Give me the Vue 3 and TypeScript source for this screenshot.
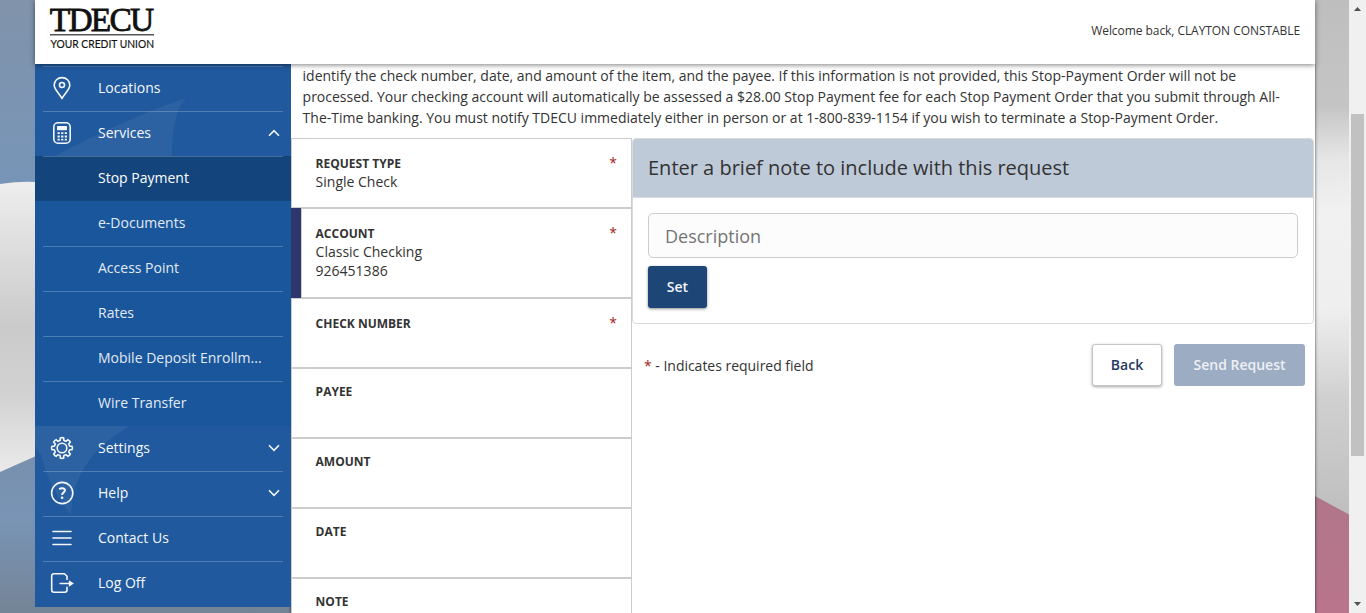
<script setup lang="ts">
interface NavItem {
  label: string
  icon?: string
  sub?: boolean
  active?: boolean
  chevron?: 'up' | 'down'
  plain?: boolean
}

interface Field {
  label: string
  values: string[]
  required?: boolean
  selected?: boolean
}

const navItems: NavItem[] = [
  { label: 'Locations', icon: 'pin' },
  { label: 'Services', icon: 'calculator', chevron: 'up' },
  { label: 'Stop Payment', sub: true, active: true },
  { label: 'e-Documents', sub: true, plain: true },
  { label: 'Access Point', sub: true },
  { label: 'Rates', sub: true },
  { label: 'Mobile Deposit Enrollm...', sub: true },
  { label: 'Wire Transfer', sub: true },
  { label: 'Settings', icon: 'gear', chevron: 'down', plain: true },
  { label: 'Help', icon: 'help', chevron: 'down' },
  { label: 'Contact Us', icon: 'menu' },
  { label: 'Log Off', icon: 'logout' },
]

const fields: Field[] = [
  { label: 'Request Type', values: ['Single Check'], required: true },
  { label: 'Account', values: ['Classic Checking', '926451386'], required: true, selected: true },
  { label: 'Check Number', values: [], required: true },
  { label: 'Payee', values: [] },
  { label: 'Amount', values: [] },
  { label: 'Date', values: [] },
  { label: 'Note', values: [] },
]

// Outline of the settings gear: eight rounded teeth around the centre.
const gearPath = (() => {
  const pts: string[] = []
  for (let i = 0; i < 8; i++) {
    const a = (i * Math.PI) / 4 - Math.PI / 2
    const at = (r: number, d: number) =>
      `${(12 + r * Math.cos(a + d)).toFixed(2)} ${(12 + r * Math.sin(a + d)).toFixed(2)}`
    pts.push(`${i ? 'L' : 'M'}${at(8, -0.22)}L${at(10.2, -0.17)}Q${at(10.8, 0)} ${at(10.2, 0.17)}L${at(8, 0.22)}Q${at(7.4, 0.39)} ${at(8, 0.565)}`)
  }
  return pts.join('') + 'Z'
})()
</script>

<template>
  <div class="page">
    <svg class="backdrop" viewBox="0 0 1349 613" preserveAspectRatio="none" aria-hidden="true">
      <defs>
        <linearGradient id="skyTop" x1="0" y1="0" x2="0" y2="1">
          <stop offset="0" stop-color="#8093aa" /><stop offset="1" stop-color="#7795b8" />
        </linearGradient>
        <linearGradient id="cloth" x1="0" y1="0" x2="0" y2="1">
          <stop offset="0" stop-color="#eeeeee" /><stop offset=".12" stop-color="#e4e4e4" />
          <stop offset=".45" stop-color="#cbcbcb" /><stop offset=".66" stop-color="#d1d1d1" />
          <stop offset=".9" stop-color="#e9e9e9" /><stop offset="1" stop-color="#e2e2e2" />
        </linearGradient>
        <linearGradient id="skyLow" x1="0" y1="0" x2="0" y2="1">
          <stop offset="0" stop-color="#7890ad" /><stop offset=".4" stop-color="#7994b5" />
          <stop offset="1" stop-color="#748496" />
        </linearGradient>
        <linearGradient id="steel" gradientUnits="userSpaceOnUse" x1="1330" y1="0" x2="1350" y2="530">
          <stop offset="0" stop-color="#bebebe" /><stop offset=".2" stop-color="#c5c5c5" />
          <stop offset=".3" stop-color="#e6e6e6" /><stop offset=".4" stop-color="#f1f1f1" />
          <stop offset=".58" stop-color="#efefef" /><stop offset=".75" stop-color="#d0d0d0" />
          <stop offset="1" stop-color="#bcbcbc" />
        </linearGradient>
        <linearGradient id="rose" x1="0" y1="0" x2="0" y2="1">
          <stop offset="0" stop-color="#b0768a" /><stop offset="1" stop-color="#b9758c" />
        </linearGradient>
      </defs>
      <rect width="36" height="190" fill="url(#skyTop)" />
      <path d="M0 184Q20 181 36 182V500H0Z" fill="url(#cloth)" />
      <path d="M0 472L36 456V606H292V613H0Z" fill="url(#skyLow)" />
      <rect x="1314" width="35" height="530" fill="url(#steel)" />
      <path d="M1314 495.500L1349 514.500V613H1314Z" fill="url(#rose)" />
    </svg>

    <div class="shell">
      <header class="top">
        <svg class="logo" width="106" height="44" viewBox="0 0 106 44" role="img" aria-label="TDECU Your Credit Union">
          <text class="brand" x="-0.200" y="24" textLength="104.500" lengthAdjust="spacing">TDECU</text>
          <rect x="0" y="27" width="104" height="1.500" fill="#555" />
          <text class="tag" x="0.500" y="40.500" textLength="103.500" lengthAdjust="spacingAndGlyphs">YOUR CREDIT UNION</text>
        </svg>
        <span class="welcome">Welcome back, CLAYTON CONSTABLE</span>
      </header>

      <div class="body">
        <nav class="nav">
          <svg class="sheen" width="256" height="543" viewBox="0 0 256 543" aria-hidden="true">
            <path d="M20 92Q90 55 151 34Q137 48 137 92Z" fill="#fff" opacity=".06" />
            <path d="M0 362H95Q60 382 47 408Q37 424 36 451Q12 420 6 390Q0 385 0 380Z" fill="#fff" opacity=".06" />
          </svg>
          <ul class="nav-list">
            <li
              v-for="item in navItems"
              :key="item.label"
              :class="['nav-item', { sub: item.sub, active: item.active, plain: item.plain }]"
            >
              <span class="nav-icon">
                <svg v-if="item.icon" width="24" height="24" viewBox="0 0 24 24">
                  <g v-if="item.icon === 'pin'">
                    <path d="M12 22.500C9 17 4.200 13.500 4.200 9A7.800 7.400 0 0 1 19.800 9C19.800 13.500 15 17 12 22.500Z" />
                    <circle cx="12" cy="9" r="2.500" />
                  </g>
                  <g v-else-if="item.icon === 'calculator'">
                    <rect x="3.800" y="1.800" width="16.400" height="20.400" rx="4.200" />
                    <rect class="solid" x="7" y="5" width="10" height="4.200" rx=".6" />
                    <path class="keys" d="M7.500 12.200H17M7.500 15.500H17M7.500 18.700H17" stroke-dasharray="2.300 1.300" />
                  </g>
                  <g v-else-if="item.icon === 'gear'">
                    <path :d="gearPath" />
                    <circle cx="12" cy="12" r="4.800" />
                  </g>
                  <g v-else-if="item.icon === 'help'">
                    <circle cx="12.200" cy="12" r="10.600" />
                    <path class="bold" d="M9.200 8.200C11 6.600 15.200 6.800 14.900 9.700C14.600 11.600 12.100 11.700 12.100 14" />
                    <circle class="solid" cx="12.100" cy="16.800" r="1.300" />
                  </g>
                  <path v-else-if="item.icon === 'menu'" d="M3 5.500H21M3 12H21M3 18.500H21" />
                  <g v-else>
                    <path d="M17 8.500V5.300L14.500 2.800H4Q1.700 2.800 1.700 5V19Q1.700 21.200 4 21.200H14.700Q17 21.200 17 19V16.300" />
                    <path d="M10.200 12.500H20" />
                    <path class="solid" d="M18.900 9.300L23.900 12.500L18.900 15.700Z" />
                  </g>
                </svg>
              </span>
              <span class="nav-label">{{ item.label }}</span>
              <svg v-if="item.chevron" class="chevron" width="12" height="8" viewBox="0 0 12 8">
                <path :d="item.chevron === 'up' ? 'M1 6.700L6 1.700L11 6.700' : 'M1 1.300L6 6.300L11 1.300'" />
              </svg>
            </li>
          </ul>
        </nav>

        <main class="content">
          <p class="intro">
            identify the check number, date, and amount of the item, and the payee. If this information is not provided, this Stop-Payment Order will not be<br />
            processed. Your checking account will automatically be assessed a $28.00 Stop Payment fee for each Stop Payment Order that you submit through All-<br />
            The-Time banking. You must notify TDECU immediately either in person or at 1-800-839-1154 if you wish to terminate a Stop-Payment Order.
          </p>
          <div class="columns">
            <ul class="fields">
              <li
                v-for="f in fields"
                :key="f.label"
                :class="['field', { required: f.required, selected: f.selected }]"
              >
                <div class="field-text">
                  <div class="field-label">{{ f.label }}</div>
                  <div v-for="v in f.values" :key="v" class="field-value">{{ v }}</div>
                </div>
                <span v-if="f.required" class="star">*</span>
              </li>
            </ul>
            <section class="detail">
              <div class="panel">
                <h2 class="panel-head">Enter a brief note to include with this request</h2>
                <div class="panel-body">
                  <input class="note" type="text" placeholder="Description" />
                  <button class="btn primary" type="button">Set</button>
                </div>
              </div>
              <div class="actions">
                <span class="legend"><span class="mark">*</span> - Indicates required field</span>
                <button class="btn back" type="button">Back</button>
                <button class="btn send" type="button">Send Request</button>
              </div>
            </section>
          </div>
        </main>
      </div>
    </div>

    <div class="scrollbar" aria-hidden="true">
      <svg width="17" height="17" viewBox="0 0 17 17"><path d="M5 11L8.500 7L12 11Z" fill="#505050" /></svg>
      <div class="thumb"></div>
      <svg width="17" height="17" viewBox="0 0 17 17"><path d="M5 6L8.500 10L12 6Z" fill="#505050" /></svg>
    </div>
  </div>
</template>

<style>
html,
body {
  overflow: hidden;
}
</style>

<style scoped>
* {
  box-sizing: border-box;
}
.page {
  position: relative;
  display: flex;
  height: 613px;
  width: 1366px;
  padding-left: 35px;
  overflow: hidden;
  font-family: 'Open Sans', 'Noto Sans', sans-serif;
  font-size: 14px;
  color: #333;
}
.backdrop {
  position: absolute;
  left: 0;
  top: 0;
  width: 1349px;
  height: 613px;
}
.shell {
  position: relative;
  width: 1280px;
  height: 613px;
  margin-right: 34px;
  flex: none;
}
.top {
  position: relative;
  z-index: 2;
  display: flex;
  justify-content: space-between;
  height: 64px;
  padding: 7px 15px 0;
  background: #fff;
  box-shadow: 0 1px 5px rgba(0, 0, 0, 0.5);
}
.logo {
  display: block;
  overflow: visible;
}
.brand {
  font-family: 'Liberation Serif', serif;
  font-size: 33.5px;
  fill: #111;
  stroke: #111;
  stroke-width: 0.8px;
}
.tag {
  font-family: Lato, sans-serif;
  font-size: 11px;
  fill: #111;
  stroke: #111;
  stroke-width: 0.15px;
}
.welcome {
  padding-top: 15px;
  font-size: 12px;
  letter-spacing: -0.06px;
  line-height: 17px;
}
.body {
  display: flex;
  align-items: flex-start;
  height: 549px;
}
.nav {
  position: relative;
  width: 256px;
  height: 543px;
  padding-top: 2px;
  background: #20599d;
  flex: none;
}
.sheen {
  position: absolute;
  left: 0;
  top: 0;
}
.nav-list,
.fields {
  position: relative;
  margin: 0;
  padding: 0;
  list-style: none;
}
.nav-item {
  position: relative;
  display: flex;
  align-items: center;
  height: 45px;
  padding: 0 11.5px 2px 15px;
  color: #f5f8fc;
}
.nav-item::before {
  content: '';
  position: absolute;
  left: 8px;
  right: 8px;
  top: 0;
  height: 1px;
  background: rgba(255, 255, 255, 0.22);
}
.nav-item.plain::before {
  display: none;
}
.nav-item.sub {
  background: #19569c;
  color: #e2eaf3;
}
.nav-item.active {
  background: #13457c;
  color: #fff;
}
.nav-icon {
  width: 24px;
  height: 24px;
  margin-right: 24px;
  flex: none;
}
.nav-icon svg {
  display: block;
  fill: none;
  stroke: #f3f7fc;
  stroke-width: 1.6;
  stroke-linejoin: round;
  stroke-linecap: round;
}
.nav-icon .solid {
  fill: #f3f7fc;
  stroke: none;
}
.nav-icon .bold {
  stroke-width: 2;
  stroke-linecap: butt;
}
.nav-icon .keys {
  stroke-width: 1.8;
  stroke-linecap: butt;
}
.nav-label {
  white-space: nowrap;
  font-weight: 500;
  line-height: 20px;
}
.chevron {
  margin-left: auto;
  fill: none;
  stroke: #f3f7fc;
  stroke-width: 1.6;
}
.content {
  width: 1024px;
  height: 549px;
  background: #fff;
  overflow: hidden;
  box-shadow: 0 0 3px rgba(0, 0, 0, 0.7);
}
.intro {
  margin: 0;
  padding: 1px 0 0 11.6px;
  height: 74px;
  line-height: 21px;
  letter-spacing: -0.005px;
  white-space: nowrap;
}
.columns {
  display: flex;
  align-items: flex-start;
}
.fields {
  width: 341px;
  flex: none;
}
.field {
  display: flex;
  justify-content: space-between;
  min-height: 70px;
  padding: 12px 14px 0 23.6px;
  border: 1px solid #ccc;
}
.field.required {
  padding-top: 14px;
}
.field.selected {
  position: relative;
  height: 90px;
  margin-left: 10px;
  padding-left: 13.6px;
}
.field.selected::before {
  content: '';
  position: absolute;
  left: -11px;
  top: -1px;
  width: 10px;
  height: 90px;
  background: #2d376e;
}
.field-label {
  padding-top: 2px;
  font-size: 12px;
  font-weight: 700;
  line-height: 17px;
  height: 19px;
  text-transform: uppercase;
}
.field-value {
  line-height: 19px;
}
.star,
.mark {
  color: #a51c1c;
}
.star {
  line-height: 19px;
}
.detail {
  width: 683px;
}
.panel {
  width: 682px;
  height: 186px;
  border: 1px solid #d9d9d9;
  border-radius: 4px;
}
.panel-head {
  height: 59px;
  margin: 0;
  padding: 0 15px;
  border-bottom: 1px solid #d9dde3;
  border-radius: 3px 3px 0 0;
  background: #bfcad9;
  font-size: 20px;
  font-weight: 400;
  line-height: 58px;
}
.panel-body {
  padding: 15px;
}
.note {
  display: block;
  width: 650px;
  height: 45px;
  margin-bottom: 8px;
  padding: 0 16px;
  border: 1px solid #ccc;
  border-radius: 5px;
  background: #fcfcfc;
  font-family: inherit;
  font-size: 18px;
}
.note::placeholder {
  color: #757575;
}
.btn {
  height: 42px;
  padding: 0 0 2px;
  border: 0;
  border-radius: 3px;
  font-family: inherit;
  font-size: 14px;
  font-weight: 600;
}
.primary {
  width: 59px;
  background: #1d4677;
  color: #f2f4f7;
  box-shadow: 0 1px 3px rgba(0, 0, 0, 0.45);
}
.actions {
  display: flex;
  align-items: center;
  padding: 20px 10px 0 12px;
}
.legend {
  margin-right: auto;
  letter-spacing: -0.02px;
}
.back {
  width: 70px;
  margin-right: 12px;
  border: 1px solid #c5c5c5;
  background: #fff;
  color: #1f3a5f;
  box-shadow: 0 1px 3px rgba(0, 0, 0, 0.35);
}
.send {
  width: 131px;
  background: #9bacc3;
  color: #eef0f3;
}
.scrollbar {
  position: relative;
  width: 17px;
  height: 613px;
  background: #f0f0f0;
  display: flex;
  flex-direction: column;
  align-items: center;
  flex: none;
}
.scrollbar svg {
  display: block;
  flex: none;
}
.thumb {
  width: 13px;
  height: 342px;
  margin: 97px 0 140px;
  background: #c1c1c1;
  flex: none;
}
</style>
